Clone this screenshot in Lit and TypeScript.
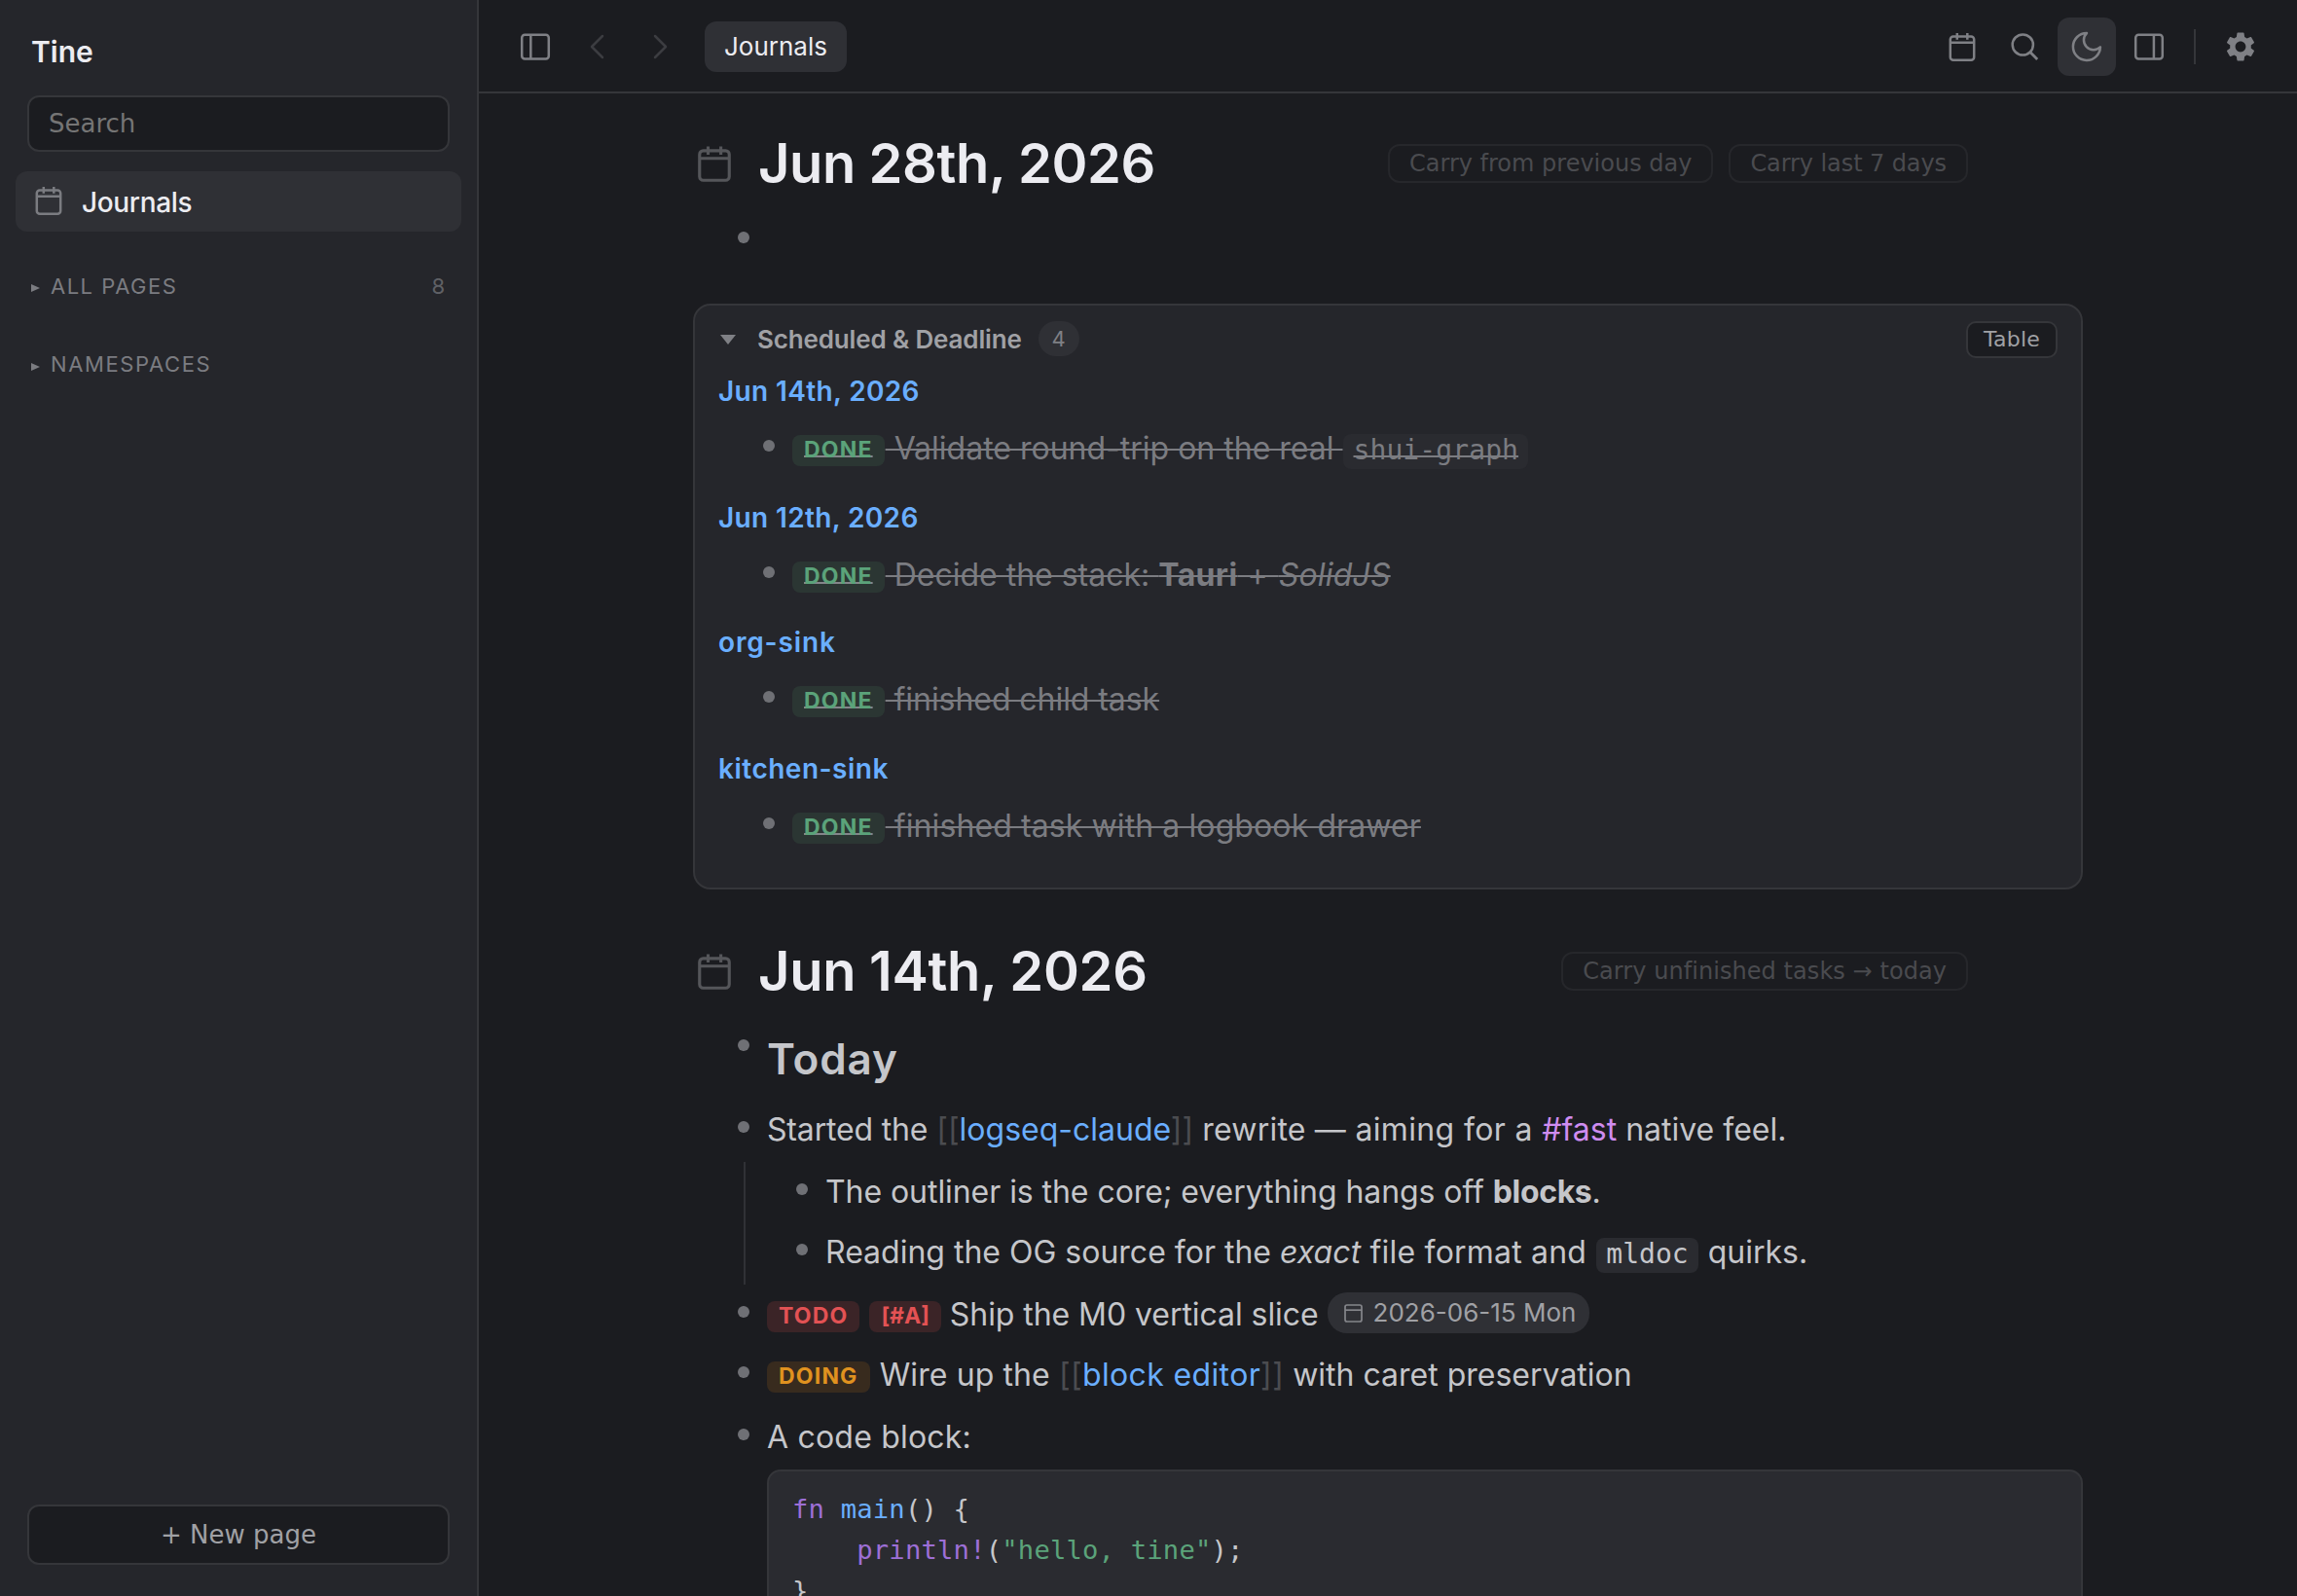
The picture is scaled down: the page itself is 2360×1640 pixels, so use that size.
import { LitElement, html, css, svg, nothing } from "lit";
import { customElement, property } from "lit/decorators.js";

const calendarShape = svg`<rect x="17.8" y="19.5" width="24.4" height="24.3" rx="3"/><path d="M17.8 25.8H42.2M24.8 16v6.7M35.3 16v6.7"/>`;

const shapes: Record<string, unknown> = {
  calendar: calendarShape,
  panelLeft: svg`<rect x="16.2" y="17.7" width="27.6" height="24.7" rx="3"/><path d="M25.3 17.7V42.4"/>`,
  panelRight: svg`<rect x="16.2" y="17.7" width="27.6" height="24.7" rx="3"/><path d="M34.9 17.7V42.4"/>`,
  chevronLeft: svg`<path d="M35 19L24 30L35 41" stroke-linecap="round" stroke-linejoin="round"/>`,
  chevronRight: svg`<path d="M25 19L36 30L25 41" stroke-linecap="round" stroke-linejoin="round"/>`,
  search: svg`<circle cx="28.3" cy="28" r="10.6"/><path d="M35.8 35.4L43.2 42.9" stroke-width="2.8"/>`,
  moon: svg`<path d="M43.9 30.4A14 14 0 1 1 30 16A9.8 9.8 0 0 0 43.9 30.4Z" stroke-linejoin="round"/>`,
  gear: svg`<path transform="translate(12 12) scale(1.5)" fill="currentColor" stroke="none" d="M19.14 12.94c.04-.3.06-.61.06-.94 0-.32-.02-.64-.07-.94l2.03-1.58c.18-.14.23-.41.12-.61l-1.92-3.32c-.12-.22-.37-.29-.59-.22l-2.39.96c-.5-.38-1.03-.7-1.62-.94l-.36-2.54c-.04-.24-.24-.41-.48-.41h-3.84c-.24 0-.43.17-.47.41l-.36 2.54c-.59.24-1.13.57-1.62.94l-2.39-.96c-.22-.08-.47 0-.59.22L2.74 8.87c-.12.21-.08.47.12.61l2.03 1.58c-.05.3-.09.63-.09.94s.02.64.07.94l-2.03 1.58c-.18.14-.23.41-.12.61l1.92 3.32c.12.22.37.29.59.22l2.39-.96c.5.38 1.03.7 1.62.94l.36 2.54c.05.24.24.41.48.41h3.84c.24 0 .44-.17.47-.41l.36-2.54c.59-.24 1.13-.56 1.62-.94l2.39.96c.22.08.47 0 .59-.22l1.92-3.32c.12-.22.07-.47-.12-.61l-2.01-1.58zM12 15.6c-1.98 0-3.6-1.62-3.6-3.6s1.62-3.6 3.6-3.6 3.6 1.62 3.6 3.6-1.62 3.6-3.6 3.6z"/>`,
};

const icon = (name: string, cls = "glyph") =>
  html`<svg class=${cls} viewBox="14 14 32 32" fill="none" stroke="currentColor" stroke-width="2.5">${shapes[name]}</svg>`;

const base = css`
  * { box-sizing: border-box; }
  .glyph { display: block; width: 32px; height: 32px; flex: none; }
`;

@customElement("tine-sidebar")
class TineSidebar extends LitElement {
  static styles = [base, css`
    :host {
      display: flex; flex-direction: column; width: 492px; height: 1640px; flex: none;
      background: #25262b; border-right: 2px solid #35363a; padding: 0 16px 32px;
    }
    .brand { margin: 35px 0 0 16px; line-height: 36px; font-size: 30px; font-weight: 600; color: #ececf1; letter-spacing: 0; }
    .search {
      margin: 27px 12px 0; height: 58px; border: 2px solid #35363a; border-radius: 12px; background: #1b1c20;
      padding: 0 20px; font: 26px/55px "DejaVu Sans", sans-serif; color: #757575;
    }
    .nav {
      margin-top: 20px; height: 62px; border-radius: 12px; background: #2f3035; display: flex; align-items: center;
      padding: 0 18px; gap: 18px; color: #7b7c81;
    }
    .nav .glyph { margin-top: -2px; }
    .label { font-size: 28px; font-weight: 500; color: #ececf1; line-height: 34px; letter-spacing: -0.35px; margin-top: 2px; }
    .section { display: flex; align-items: center; height: 40px; padding: 0 17px 0 16px; color: #7b7c81; font-size: 22px; }
    .first { margin-top: 36px; }
    .second { margin-top: 40px; }
    .arrow { width: 0; height: 0; border: 4.5px solid transparent; border-left: 9px solid #7b7c81; border-right: 0; margin: 3px 11px 0 0; }
    .name { letter-spacing: 1.5px; flex: 1; }
    .second .name { letter-spacing: 1.6px; }
    .second .arrow { margin-top: 5px; }
    .count { color: #5f6065; }
    .grow { flex: 1; }
    .create {
      margin: 0 12px; height: 62px; border: 2px solid #35363a; border-radius: 12px; background: #1b1c20;
      text-align: center; font: 26px/59px "DejaVu Sans", sans-serif; color: #a0a1a5;
    }
  `];
  render() {
    return html`
      <div class="brand">Tine</div>
      <div class="search">Search</div>
      <div class="nav">${icon("calendar")}<span class="label">Journals</span></div>
      <div class="section first"><i class="arrow"></i><span class="name">ALL PAGES</span><span class="count">8</span></div>
      <div class="section second"><i class="arrow"></i><span class="name">NAMESPACES</span></div>
      <div class="grow"></div>
      <div class="create">+ New page</div>`;
  }
}

@customElement("tine-topbar")
class TineTopbar extends LitElement {
  static styles = [base, css`
    :host {
      display: flex; align-items: center; gap: 4px; height: 96px; flex: none; padding: 0 28px;
      border-bottom: 2px solid #35363a; color: #7f8085;
    }
    .btn { width: 60px; height: 60px; border-radius: 12px; display: flex; align-items: center; justify-content: center; margin-top: 2px; }
    .on { background: #2f3035; }
    .off { color: #3c3d41; }
    .tab {
      margin: 2px 0 0 12px; height: 52px; border-radius: 12px; background: #2f3035; color: #ececf1; padding: 0 20px;
      font-size: 26px; line-height: 51px;
    }
    .grow { flex: 1; }
    .rule { width: 2px; height: 36px; margin: 2px 12px 0; background: #35363a; }
  `];
  render() {
    const btn = (name: string, cls = "") => html`<span class="btn ${cls}">${icon(name)}</span>`;
    return html`
      ${btn("panelLeft")}${btn("chevronLeft", "off")}${btn("chevronRight", "off")}
      <span class="tab">Journals</span><span class="grow"></span>
      ${btn("calendar")}${btn("search")}${btn("moon", "on")}${btn("panelRight")}
      <span class="rule"></span>${btn("gear")}`;
  }
}

@customElement("tine-day")
class TineDay extends LitElement {
  @property() heading = "";
  @property({ attribute: false }) actions: string[] = [];
  static styles = [base, css`
    :host { display: flex; align-items: center; height: 68px; padding: 0 118px 0 2px; margin-bottom: 14px; }
    .mark { width: 40px; height: 40px; flex: none; color: #55565a; margin-top: 0; }
    .title { margin-left: 25px; flex: 1; font-size: 56px; line-height: 68px; font-weight: 600; color: #ececf1; letter-spacing: var(--title-tracking, -0.38px); }
    .actions { display: flex; gap: 16px; }
    .action {
      height: 40px; border: 2px solid #26272b; border-radius: 12px; padding: 0 20px; color: #4a4b4f;
      font: 24px/37px "DejaVu Sans", sans-serif; letter-spacing: var(--action-tracking, 0);
    }
    .action:nth-child(2) { letter-spacing: -0.09px; }
  `];
  render() {
    return html`${icon("calendar", "mark")}<div class="title">${this.heading}</div>
      <div class="actions">${this.actions.map((a) => html`<span class="action">${a}</span>`)}</div>`;
  }
}

@customElement("tine-outline")
class TineOutline extends LitElement {
  static styles = [base, css`
    :host { display: block; }
    .past { --action-tracking: 0.06px; --title-tracking: -0.28px; }
    .card {
      margin: 32px 0 50px; height: 602px; border: 2px solid #35363a; border-radius: 18px; background: #25262b;
      padding: 16px 24px;
    }
    .head { display: flex; align-items: center; height: 38px; margin-bottom: 17px; }
    .caret { border: 8px solid transparent; border-top: 10px solid #7f8085; border-bottom: 0; margin: 0 22px 0 2px; }
    .name { font-size: 26px; font-weight: 600; color: #a0a1a5; letter-spacing: -0.15px; margin-top: -2px; }
    .count { margin: -2px auto 0 17px; height: 36px; width: 42px; border-radius: 18px; background: #2f3035; color: #7f8085; font-size: 22px; line-height: 36px; text-align: center; }
    .mode {
      height: 38px; border: 2px solid #35363a; border-radius: 10px; background: #1b1c20; color: #a0a1a5; padding: 0 16px;
      font: 22px/34px "DejaVu Sans", sans-serif; letter-spacing: 0.2px;
    }
    .group { height: 130px; }
    .group:nth-of-type(2) { height: 128px; }
    .page { font-size: 28px; line-height: 34px; font-weight: 600; color: #6aaeff; margin-bottom: 11px; letter-spacing: 0.36px; }
    .group:nth-of-type(3) .page { letter-spacing: 0.85px; }
    .group:nth-of-type(4) .page { letter-spacing: 0.5px; }
    .row { display: flex; height: 64px; color: #c5c6ca; font-size: 32px; }
    .short { height: 62px; }
    .tall { height: 84px; }
    .dot { width: 12px; height: 12px; border-radius: 50%; background: #6f7075; margin: 22px 18px 0 46px; flex: none; }
    .text { padding-top: 5px; line-height: 51px; white-space: pre; height: 60px; }
    .h2 { font-size: 44px; line-height: 54px; font-weight: 600; padding-top: 15px; letter-spacing: 0.9px; }
    .kids { margin-left: 52px; border-left: 2px solid #303136; padding-left: 6px; }
    .tag {
      display: inline-block; height: 32px; line-height: 31px; border-radius: 8px; padding: 0 12px; position: relative; top: -2px;
      font-size: 23px; font-weight: 700; letter-spacing: 1.2px; vertical-align: baseline; margin-right: 1px;
    }
    .done { background: #2b3633; color: #5ba37a; text-decoration: underline 2px #84858a; text-underline-offset: -2px; text-decoration-skip-ink: none; }
    .todo { background: #3b2427; color: #e35254; }
    .prio { letter-spacing: 0; margin-right: 0; }
    .doing { background: #382b1e; color: #e0921f; }
    .struck { color: #7b7c81; }
    .line { text-decoration: line-through 2px; }
    .code {
      display: inline-block; height: 36px; line-height: 34px; border-radius: 8px; padding: 0 10px; background: #2a2b30;
      font-family: "DejaVu Sans Mono", monospace; font-size: 28px; letter-spacing: 0; margin: 0 1px;
    }
    .struck .code { text-decoration: underline 2px; text-underline-offset: -4px; text-decoration-skip-ink: none; letter-spacing: 0.1px; }
    .brk { color: #4b4c50; }
    .link { color: #6aaeff; }
    .hash { color: #cf8cf0; }
    .tight { letter-spacing: -0.35px; }
    .snug { letter-spacing: -0.16px; }
    .close { letter-spacing: -0.06px; }
    .airy { letter-spacing: 0.1px; }
    .open { letter-spacing: 0.2px; }
    .loose { letter-spacing: 0.36px; }
    .wide { letter-spacing: 1px; }
    .date {
      display: inline-flex; align-items: center; height: 42px; border-radius: 20px; background: #2f3035; color: #a0a1a5; padding: 0 14px 0 17px;
      gap: 11px; font-size: 26px; vertical-align: top; margin-top: 3px; line-height: 42px; letter-spacing: 0;
    }
    .small { width: 19px; height: 19px; color: #85868b; }
    .block {
      margin-left: 76px; height: 170px; border: 2px solid #35363a; border-radius: 14px; background: #2a2b30; padding: 18px 24px;
      font: 27.2px/42px "DejaVu Sans Mono", monospace; letter-spacing: 0.19px; color: #c5c6ca;
    }
    .src { white-space: pre; height: 42px; }
    .kw { color: #9d6fd6; }
    .fn { color: #6aaeff; }
    .str { color: #5ba37a; }
  `];

  private row(content: unknown, size = "") {
    return html`<div class="row ${size}"><i class="dot"></i>${content}</div>`;
  }
  private done(content: unknown) {
    return this.row(html`<div class="text struck"><span class="tag done">DONE</span>${content}</div>`);
  }
  private ref(name: string, tracking = "") {
    return html`<span class=${tracking}><span class="brk">[[</span><span class="link">${name}</span><span class="brk">]]</span></span>`;
  }

  render() {
    const groups: [string, unknown][] = [
      ["Jun 14th, 2026", html`<span class="line"> Validate round-trip on the real </span><span class="code">shui-graph</span>`],
      ["Jun 12th, 2026", html`<span class="line"> Decide the stack: <b class="loose">Tauri</b><span class="wide"> + </span><i class="open">SolidJS</i></span>`],
      ["org-sink", html`<span class="line close"> finished child task</span>`],
      ["kitchen-sink", html`<span class="line airy"> finished task with a logbook drawer</span>`],
    ];
    return html`
      <tine-day .heading=${"Jun 28th, 2026"} .actions=${["Carry from previous day", "Carry last 7 days"]}></tine-day>
      ${this.row(nothing)}
      <section class="card">
        <header class="head"><i class="caret"></i><span class="name">Scheduled &amp; Deadline</span><span class="count">4</span><span class="mode">Table</span></header>
        ${groups.map(([page, body]) => html`<div class="group"><div class="page">${page}</div>${this.done(body)}</div>`)}
      </section>
      <tine-day class="past" .heading=${"Jun 14th, 2026"} .actions=${["Carry unfinished tasks → today"]}></tine-day>
      ${this.row(html`<div class="text h2">Today</div>`, "tall")}
      ${this.row(html`<div class="text"><span class="snug">Started the </span>${this.ref("logseq-claude")}<span class="open"> rewrite —</span><span class="loose"> aiming for a </span><span class="hash">#fast</span> native feel.</div>`)}
      <div class="kids">
        ${this.row(html`<div class="text"><span class="close">The outliner is the core; everything hangs off </span><b class="tight">blocks</b>.</div>`, "short")}
        ${this.row(html`<div class="text">Reading the OG source for the <i class="airy">exact</i><span class="open"> file format and </span><span class="code">mldoc</span> quirks.</div>`)}
      </div>
      ${this.row(html`<div class="text close"><span class="tag todo">TODO</span> <span class="tag todo prio">[#A]</span> Ship the M0 vertical slice <span class="date"><svg class="small" viewBox="0 0 19 19" fill="none" stroke="currentColor" stroke-width="1.7"><rect x="1" y="1" width="17" height="17" rx="2"/><path d="M1 6.2H18"/></svg>2026-06-15 Mon</span></div>`, "short")}
      ${this.row(html`<div class="text"><span class="tag doing">DOING</span><span class="airy"> Wire up the </span>${this.ref("block editor", "loose")} with caret preservation</div>`)}
      ${this.row(html`<div class="text open">A code block:</div>`)}
      <div class="block">
        <div class="src"><span class="kw">fn</span> <span class="fn">main</span>() {</div>
        <div class="src">    <span class="kw">println!</span>(<span class="str">"hello, tine"</span>);</div>
        <div class="src">}</div>
      </div>`;
  }
}

@customElement("app-root")
class AppRoot extends LitElement {
  static styles = [base, css`
    :host { display: flex; width: 2360px; height: 1640px; overflow: hidden; background: #1b1c20; font-family: Inter, "Liberation Sans", sans-serif; }
    .main { flex: 1; display: flex; flex-direction: column; min-width: 0; height: 1640px; overflow: hidden; }
    .page { width: 1428px; margin: 38px auto 0; flex: none; }
  `];
  render() {
    return html`<tine-sidebar></tine-sidebar><main class="main"><tine-topbar></tine-topbar><tine-outline class="page"></tine-outline></main>`;
  }
}
